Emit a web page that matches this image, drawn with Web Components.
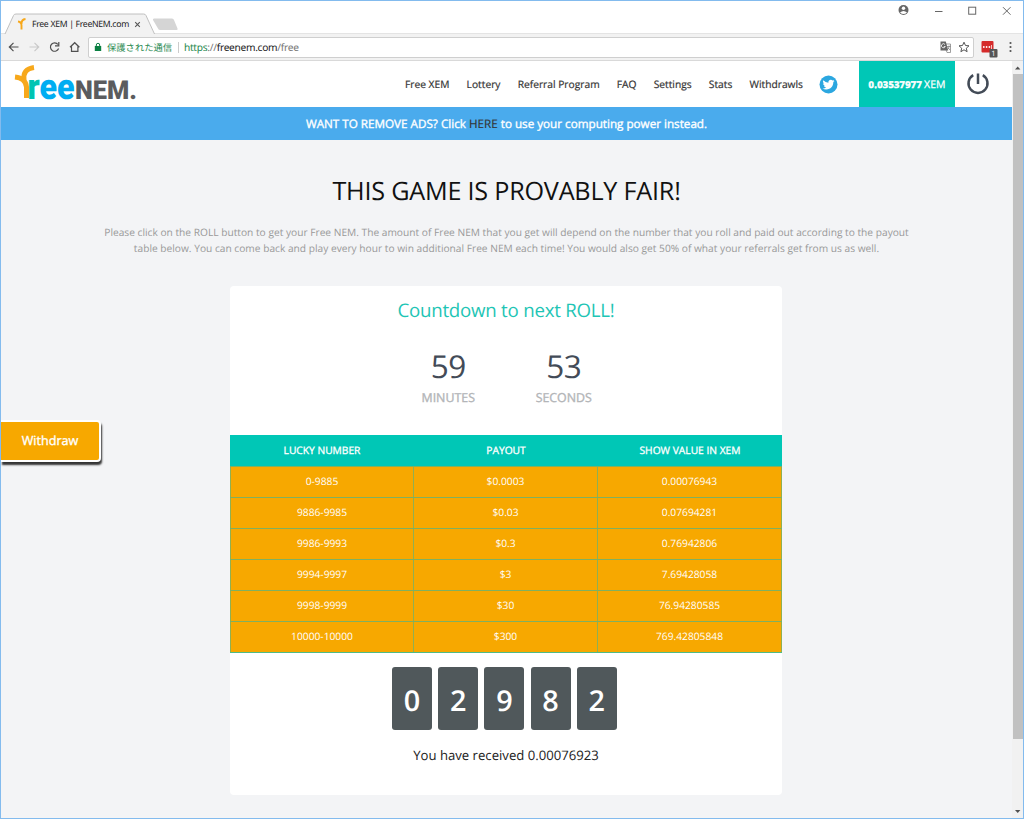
<!DOCTYPE html>
<html lang="en">
<head>
<meta charset="utf-8">
<title>Free XEM | FreeNEM.com</title>
<style>
    html, body {
        margin: 0;
        height: 100%;
        overflow: hidden;
    }

    body {
        --teal: #00c7b6;
        --orange: #f7a800;
        --blue: #4aabed;
        --page: #f3f4f6;
        --slate: #434b57;
        font-family: "Open Sans", "Noto Sans CJK JP", sans-serif;
        text-rendering: geometricPrecision;
        color: #333;
    }
</style>
</head>
<body>
<browser-window>
    <browser-tabs slot="chrome" label="Free XEM | FreeNEM.com"></browser-tabs>
    <browser-toolbar slot="chrome"></browser-toolbar>
    <site-header>
        <nav-link>Free XEM</nav-link>
        <nav-link>Lottery</nav-link>
        <nav-link>Referral Program</nav-link>
        <nav-link>FAQ</nav-link>
        <nav-link>Settings</nav-link>
        <nav-link>Stats</nav-link>
        <nav-link>Withdrawls</nav-link>
    </site-header>
    <ad-banner></ad-banner>
    <game-intro>
        <span slot="title">THIS GAME IS PROVABLY FAIR!</span>
        <div>Please click on the ROLL button to get your Free NEM. The amount of Free NEM that you get will depend on the number that you roll and paid out according to the payout</div>
        <div>table below. You can come back and play every hour to win additional Free NEM each time! You would also get 50% of what your referrals get from us as well.</div>
    </game-intro>
    <roll-card>
        <count-down>
            <count-unit value="59">MINUTES</count-unit>
            <count-unit value="53">SECONDS</count-unit>
        </count-down>
        <payout-table></payout-table>
        <roll-digits value="02982"></roll-digits>
        <span slot="result">You have received 0.00076923</span>
    </roll-card>
    <withdraw-tab>Withdraw</withdraw-tab>
</browser-window>

<script>
class BaseElement extends HTMLElement {
    connectedCallback() {
        if (this.shadowRoot) return;
        this.attachShadow({ mode: "open" });
        this.shadowRoot.innerHTML = this.render();
    }
}

class BrowserWindow extends BaseElement {
    render() {
        return `
            <style>
                :host {
                    display: flex;
                    flex-direction: column;
                    position: relative;
                    box-sizing: border-box;
                    width: 1024px;
                    height: 819px;
                    border: 1px solid #83bbee;
                    background: #fff;
                    overflow: hidden;
                }
                .body { flex: 1; display: flex; min-height: 0; }
                .page { flex: 1; background: var(--page); overflow: hidden; }
                .bar {
                    width: 11px;
                    display: flex;
                    flex-direction: column;
                    align-items: center;
                    background: #f1f1f1;
                }
                .thumb { width: 10px; height: 665px; margin-left: 1px; background: #c1c1c1; }
                .grow { flex: 1; }
                svg { display: block; width: 11px; height: 13px; }
            </style>
            <slot name="chrome"></slot>
            <div class="body">
                <div class="page"><slot></slot></div>
                <div class="bar">
                    <svg viewBox="0 0 11 13"><path d="M3 8.500h5.400L5.700 5.500z" fill="#505050"/></svg>
                    <div class="thumb"></div>
                    <div class="grow"></div>
                    <svg viewBox="0 0 11 13"><path d="M3 5h5.400L5.700 8z" fill="#505050"/></svg>
                </div>
            </div>
        `;
    }
}

class BrowserTabs extends BaseElement {
    render() {
        return `
            <style>
                :host { display: flex; height: 33px; flex: none; position: relative; border-bottom: 1px solid #e4e4e4; box-sizing: border-box; }
                .shape { position: absolute; left: 0; top: 0; width: 200px; height: 33px; }
                .tab {
                    position: relative;
                    display: flex;
                    align-items: center;
                    gap: 5px;
                    height: 20px;
                    padding: 13px 0 0 16px;
                    font: 8.700px "Noto Sans", sans-serif;
                    letter-spacing: -0.320px;
                    color: #222;
                    white-space: nowrap;
                }
                .tab span { width: 97px; }
                .fav { width: 10px; height: 12px; }
                .close { width: 7px; height: 7px; }
                .controls { position: relative; margin-left: auto; width: 130px; height: 22px; }
            </style>
            <svg class="shape" viewBox="0 0 200 33">
                <path d="M0 33.500h4L12.500 14.500Q13 13 15 13H142.500Q144.500 13 145 14.500L153.500 33.500z" fill="#f2f2f2"/>
                <path d="M4 33L12.500 14.500Q13 13 15 13H142.500Q144.500 13 145 14.500L153.500 33" fill="none" stroke="#b9b9b9" stroke-width=".9"/>
                <path d="M153 17.500h18q1.500 0 2 1.500l3.500 8.500q.5 1.500-1 1.500h-16q-2 0-2.500-1.500L152 19q-.5-1.500 1-1.500z" fill="#d5d5d5"/>
            </svg>
            <div class="tab">
                <svg class="fav" viewBox="0 0 10 12">
                    <path d="M1 3.500Q4.500 4 4.500 7.500V11.500M4.500 6Q4.300 1.500 8.500 1" fill="none" stroke="#f7a81b" stroke-width="1.900"/>
                </svg>
                <span>${this.getAttribute("label")}</span>
                <svg class="close" viewBox="0 0 7 7"><path d="M1.200 1.200L5.800 5.800M5.800 1.200L1.200 5.800" stroke="#555" stroke-width="1.100"/></svg>
            </div>
            <svg class="controls" viewBox="0 0 130 22">
                <circle cx="10.500" cy="9" r="5" fill="#666"/>
                <circle cx="10.500" cy="7.300" r="1.700" fill="#fff"/>
                <path d="M7 11.500Q10.500 8.500 14 11.500Q10.500 14.500 7 11.500z" fill="#fff"/>
                <path d="M42 10.500h7.500" stroke="#666"/>
                <rect x="75.700" y="6.200" width="7" height="7" fill="none" stroke="#666"/>
                <path d="M110 6.200l7.500 7.500M117.500 6.200l-7.500 7.500" stroke="#666" fill="none"/>
            </svg>
        `;
    }
}

class BrowserToolbar extends BaseElement {
    render() {
        return `
            <style>
                :host {
                    display: flex;
                    align-items: center;
                    flex: none;
                    height: 27px;
                    box-sizing: border-box;
                    background: #f2f2f2;
                    border-bottom: 1px solid #d9d9d9;
                }
                svg { display: block; }
                .nav { width: 87px; height: 26px; flex: none; }
                .field {
                    flex: 1;
                    display: flex;
                    align-items: center;
                    height: 21px;
                    box-sizing: border-box;
                    padding: 0 0 0 5px;
                    background: #fff;
                    border: 1px solid #cfcfcf;
                    border-radius: 2px;
                    font: 10.200px "Noto Sans", "Noto Sans CJK JP", sans-serif;
                    white-space: nowrap;
                }
                .secure { margin-left: 5px; width: 65px; color: #27894f; font-family: "Noto Sans CJK JP"; font-size: 9.300px; line-height: 16px; }
                .sep { width: 1px; height: 11px; margin: 0 5px 0 6px; background: #ccc; }
                .url { color: #777; letter-spacing: -0.300px; }
                .url b { font-weight: 400; color: #222; }
                .url i { font-style: normal; color: #27894f; }
                .actions { width: 34px; height: 14px; margin-left: auto; }
                .ext { width: 49px; height: 26px; flex: none; }
            </style>
            <svg class="nav" viewBox="0 0 87 26" fill="none" stroke="#505050" stroke-width="1.200">
                <path d="M17.500 13H8.500M12.500 8.800L8.300 13l4.200 4.200"/>
                <path d="M28.500 13h9M33.500 8.800l4.200 4.200-4.200 4.200" stroke="#c9c9c9"/>
                <path d="M57 10.500A4.200 4.200 0 1 0 57.600 14.500M57.800 8v3.800H54"/>
                <path d="M69 13.200l4.700-4.500 4.700 4.500M70.500 12.500v4.800h6.400v-4.800"/>
            </svg>
            <div class="field">
                <svg width="8" height="10" viewBox="0 0 8 10">
                    <rect x=".8" y="4" width="6.400" height="5" fill="#0b8043"/>
                    <path d="M2.300 4.500V3a1.700 1.700 0 0 1 3.400 0v1.500" fill="none" stroke="#0b8043"/>
                </svg>
                <span class="secure">保護された通信</span>
                <span class="sep"></span>
                <span class="url"><i>https</i>://<b>freenem.com</b>/free</span>
                <svg class="actions" viewBox="0 0 34 14">
                    <path d="M5 4h6.500v8.500H8z" fill="#fff" stroke="#888" stroke-width=".8"/>
                    <path d="M1.500 1.500h5.300L9.200 10.500H1.500z" fill="#666"/>
                    <path d="M6 4.500A2 2 0 1 0 6.300 6.500H4.800" fill="none" stroke="#fff" stroke-width=".8"/>
                    <path d="M8 6.500h3.500M10 5.500v1Q10 8.500 8.500 9.500M8.800 7.500L11 10" fill="none" stroke="#777" stroke-width=".7"/>
                    <path d="M25 2.200l1.500 3.300 3.500.3-2.700 2.400.8 3.500-3.100-1.900-3.100 1.900.8-3.500L20 5.800l3.500-.3z" fill="none" stroke="#555"/>
                </svg>
            </div>
            <svg class="ext" viewBox="0 0 49 26">
                <rect x="7.500" y="7" width="12" height="11.500" rx="1" fill="#d52b2b"/>
                <g fill="#fff"><circle cx="9.800" cy="13" r=".9"/><circle cx="12.600" cy="13" r=".9"/><circle cx="15.400" cy="13" r=".9"/><path d="M17.300 11h.7v4h-.7z"/></g>
                <rect x="15.500" y="15" width="8" height="8.500" rx="1" fill="#555"/>
                <text x="19.500" y="22" font-size="7.500" font-family="Open Sans, sans-serif" text-anchor="middle" fill="#fff">1</text>
                <g fill="#555"><circle cx="36.500" cy="9" r="1.100"/><circle cx="36.500" cy="13" r="1.100"/><circle cx="36.500" cy="17" r="1.100"/></g>
            </svg>
        `;
    }
}

class SiteHeader extends BaseElement {
    render() {
        return `
            <style>
                :host { display: flex; align-items: center; height: 46px; background: #fff; }
                svg { display: block; flex: none; }
                nav { display: flex; justify-content: space-between; width: 398px; margin-left: 261px; }
                .twitter { margin-left: 15.500px; }
                .balance {
                    display: flex;
                    align-items: baseline;
                    justify-content: center;
                    gap: 2px;
                    width: 96px;
                    height: 46px;
                    line-height: 47px;
                    margin-left: 21.500px;
                    background: var(--teal);
                    color: #fff;
                    font-size: 10.500px;
                    -webkit-text-stroke: .25px #fff;
                    white-space: nowrap;
                }
                .amount { font-size: 9.300px; font-weight: 700; letter-spacing: .3px; -webkit-text-stroke: .5px #fff; }
                .power { margin-left: 11px; }
            </style>
            <svg width="143" height="46" viewBox="1 61 143 46" font-family="Roboto, sans-serif" font-weight="900">
                <text x="27.500" y="98.500" font-size="36" textLength="47" lengthAdjust="spacingAndGlyphs" fill="#00adf2"><tspan fill="#00c4b3">r</tspan>ee</text>
                <text x="75" y="98.500" font-size="26" textLength="62" lengthAdjust="spacingAndGlyphs" fill="#5b5c5e">NEM.</text>
                <path d="M15 77Q25.500 78 26.500 87V98" fill="none" stroke="#f7a81b" stroke-width="5"/>
                <path d="M24 80Q22.500 69 34 67.500" fill="none" stroke="#f7a81b" stroke-width="5"/>
            </svg>
            <nav><slot></slot></nav>
            <svg class="twitter" width="19" height="19" viewBox="0 0 19 19">
                <circle cx="9.500" cy="9.500" r="9" fill="#2ca7e0"/>
                <path transform="translate(3.500 3.700) scale(.5)" fill="#fff" d="M23.950 4.570a10 10 0 0 1-2.820.77 4.960 4.960 0 0 0 2.160-2.720 9.900 9.900 0 0 1-3.120 1.190 4.920 4.920 0 0 0-8.380 4.480A14 14 0 0 1 1.640 3.160a4.920 4.920 0 0 0 1.520 6.570 4.900 4.900 0 0 1-2.230-.61v.06a4.920 4.920 0 0 0 3.950 4.830 5 5 0 0 1-2.210.08 4.940 4.940 0 0 0 4.600 3.420A9.870 9.870 0 0 1 0 19.540a14 14 0 0 0 7.550 2.210c9.050 0 14-7.500 14-13.980 0-.21 0-.42-.02-.63a9.940 9.940 0 0 0 2.460-2.550z"/>
            </svg>
            <div class="balance"><span class="amount">0.03537977</span><span>XEM</span></div>
            <svg class="power" width="24" height="24" viewBox="0 0 24 24" fill="none" stroke="#434b57" stroke-width="2.500">
                <path d="M7.200 3.200A9.500 9.500 0 1 0 16.800 3.200M12 1.500V12"/>
            </svg>
        `;
    }
}

class NavLink extends BaseElement {
    render() {
        return `
            <style>
                :host { display: block; font-size: 10.240px; line-height: 16px; color: #333; white-space: nowrap; -webkit-text-stroke: .2px #333; }
            </style>
            <slot></slot>
        `;
    }
}

class AdBanner extends BaseElement {
    render() {
        return `
            <style>
                :host {
                    display: block;
                    height: 33px;
                    line-height: 35px;
                    background: var(--blue);
                    color: #fff;
                    text-align: center;
                    font-size: 11.680px;
                    white-space: nowrap;
                    -webkit-text-stroke: .35px;
                }
                b { font-weight: 400; color: #333; -webkit-text-stroke: .15px; }
            </style>
            WANT TO REMOVE ADS? Click <b>HERE</b> to use your computing power instead.
        `;
    }
}

class GameIntro extends BaseElement {
    render() {
        return `
            <style>
                :host { display: block; text-align: center; white-space: nowrap; }
                h1 { margin: 0; padding-top: 33px; font-size: 25.200px; line-height: 36px; font-weight: 400; letter-spacing: -.22px; color: #111; }
                .text { margin-top: 15px; font-size: 10.200px; line-height: 16px; color: #999; }
            </style>
            <h1><slot name="title"></slot></h1>
            <div class="text"><slot></slot></div>
        `;
    }
}

class RollCard extends BaseElement {
    render() {
        return `
            <style>
                :host {
                    display: block;
                    width: 552px;
                    height: 509px;
                    margin: 30px 0 0 229px;
                    background: #fff;
                    border-radius: 4px;
                    text-align: center;
                }
                h2 { margin: 0; padding-top: 11px; font-size: 18.700px; line-height: 27px; font-weight: 400; letter-spacing: -.24px; color: #1fc5b5; }
                .result { margin-top: 15px; font-size: 13.150px; line-height: 20px; color: #222; }
            </style>
            <h2>Countdown to next ROLL!</h2>
            <slot></slot>
            <div class="result"><slot name="result"></slot></div>
        `;
    }
}

class CountDown extends BaseElement {
    render() {
        return `
            <style>
                :host { display: flex; justify-content: center; height: 111px; }
            </style>
            <slot></slot>
        `;
    }
}

class CountUnit extends BaseElement {
    render() {
        return `
            <style>
                :host { display: block; width: 115.500px; padding-top: 21px; }
                .value { font-size: 31.500px; line-height: 44px; letter-spacing: -.5px; color: var(--slate); }
                .label { font-size: 12.400px; line-height: 17px; color: #b3b5b8; -webkit-text-stroke: .35px #b3b5b8; }
            </style>
            <div class="value">${this.getAttribute("value")}</div>
            <div class="label"><slot></slot></div>
        `;
    }
}

const PAYOUTS = [
    ["0-9885", "$0.0003", "0.00076943"],
    ["9886-9985", "$0.03", "0.07694281"],
    ["9986-9993", "$0.3", "0.76942806"],
    ["9994-9997", "$3", "7.69428058"],
    ["9998-9999", "$30", "76.94280585"],
    ["10000-10000", "$300", "769.42805848"],
];

class PayoutTable extends BaseElement {
    render() {
        const rows = PAYOUTS.map(
            (row) => `<div class="row">${row.map((cell) => `<span>${cell}</span>`).join("")}</div>`
        ).join("");
        return `
            <style>
                :host { display: block; color: #fff; font-size: 10.240px; border-bottom: 1px solid #4fbb86; }
                .row {
                    display: grid;
                    grid-template-columns: 184px 184px 184px;
                    height: 31px;
                    line-height: 29px;
                    box-sizing: border-box;
                    background: var(--orange);
                    border-top: 1px solid #7fb060;
                }
                .row span { border-right: 1px solid #8fb052; }
                .row span:first-child { border-left: 1px solid #8fb052; }
                .head { line-height: 31px; background: var(--teal); border: 0; -webkit-text-stroke: .3px #fff; }
                .row.head span { border: 0; }
            </style>
            <div class="row head"><span>LUCKY NUMBER</span><span>PAYOUT</span><span>SHOW VALUE IN XEM</span></div>
            ${rows}
        `;
    }
}

class RollDigits extends BaseElement {
    render() {
        const digits = [...this.getAttribute("value")];
        return `
            <style>
                :host { display: flex; gap: 6.200px; padding: 14px 0 0 162px; }
                span {
                    width: 40px;
                    height: 63px;
                    line-height: 68px;
                    background: #50585b;
                    border-radius: 3px;
                    color: #fff;
                    font-size: 28.800px;
                    font-weight: 600;
                }
            </style>
            ${digits.map((d) => `<span>${d}</span>`).join("")}
        `;
    }
}

class WithdrawTab extends BaseElement {
    render() {
        return `
            <style>
                :host {
                    position: absolute;
                    left: 0;
                    top: 419px;
                    display: block;
                    width: 98px;
                    height: 38px;
                    line-height: 38px;
                    background: var(--orange);
                    border: 2px solid #fff;
                    border-left: 0;
                    border-radius: 0 4px 4px 0;
                    box-shadow: 1px 3px 2px #333;
                    color: #fff;
                    font-size: 12.600px;
                    text-align: center;
                    -webkit-text-stroke: .35px #fff;
                }
            </style>
            <slot></slot>
        `;
    }
}

customElements.define("browser-window", BrowserWindow);
customElements.define("browser-tabs", BrowserTabs);
customElements.define("browser-toolbar", BrowserToolbar);
customElements.define("site-header", SiteHeader);
customElements.define("nav-link", NavLink);
customElements.define("ad-banner", AdBanner);
customElements.define("game-intro", GameIntro);
customElements.define("roll-card", RollCard);
customElements.define("count-down", CountDown);
customElements.define("count-unit", CountUnit);
customElements.define("payout-table", PayoutTable);
customElements.define("roll-digits", RollDigits);
customElements.define("withdraw-tab", WithdrawTab);
</script>
</body>
</html>
